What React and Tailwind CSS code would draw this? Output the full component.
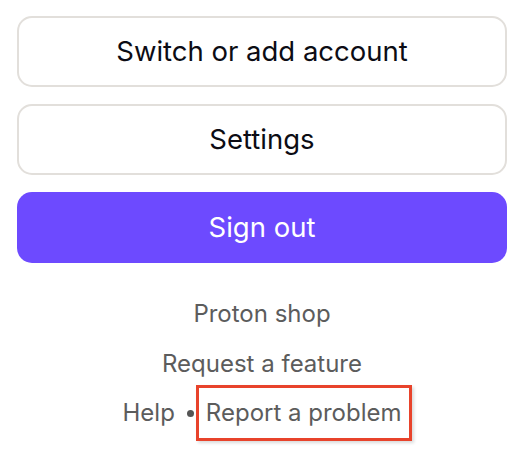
import React from 'react';

const btn = 'w-full h-[71px] rounded-[15px] text-[27.5px] flex items-center justify-center';

const App = () => {
  return (
    <div className="w-[524px] h-[454px] bg-white px-[17px] pt-4 font-['Inter',sans-serif]">
      <div className="flex flex-col gap-[17px]">
        <button className={`${btn} border-2 border-[#e2dfdb] text-[#0c0c14]`}>Switch or add account</button>
        <button className={`${btn} border-2 border-[#e2dfdb] text-[#0c0c14]`}>Settings</button>
        <button className={`${btn} bg-[#6d4aff] text-white`}>Sign out</button>
      </div>

      <div className="flex flex-col items-center text-[24px] text-[#5c5c5c] mt-[37px]">
        <a className="leading-[28px]">Proton shop</a>
        <a className="leading-[28px] mt-[22px]">Request a feature</a>
        <div className="flex items-center mt-[7px] ml-[10px]">
          <span>Help</span>
          <span className="w-[7px] h-[7px] rounded-full bg-[#555] ml-[12px] mr-[2px]" />
          <span className="border-[3px] border-[#e8432b] px-[7px] h-[56px] flex items-center shadow-[2px_2px_3px_rgba(0,0,0,0.15)]">
            Report a problem
          </span>
        </div>
      </div>
    </div>
  );
};

export default App;
